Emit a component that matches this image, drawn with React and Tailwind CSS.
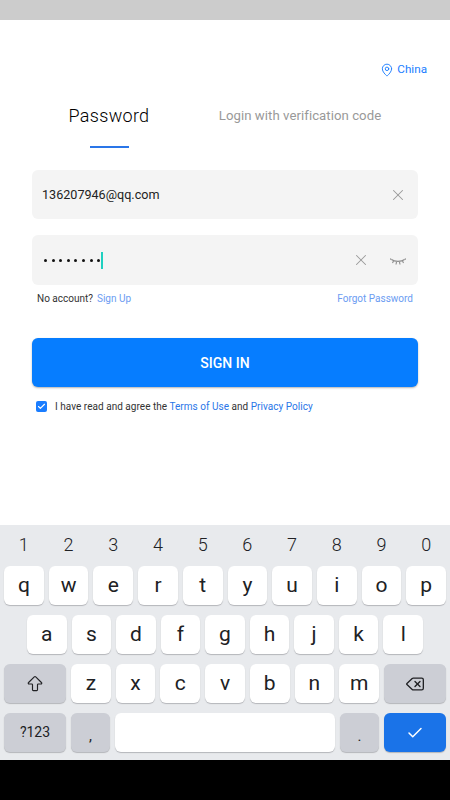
import { MapPin, X, Check, Delete, ArrowBigUp } from 'lucide-react';

const row1 = ['q', 'w', 'e', 'r', 't', 'y', 'u', 'i', 'o', 'p'];
const row2 = ['a', 's', 'd', 'f', 'g', 'h', 'j', 'k', 'l'];
const row3 = ['z', 'x', 'c', 'v', 'b', 'n', 'm'];
const digits = ['1', '2', '3', '4', '5', '6', '7', '8', '9', '0'];

function Key({ children, className = '' }) {
  return (
    <div className={`h-[39px] flex items-center justify-center rounded-[6px] text-[#202124] shadow-[0_1px_1px_#b4b6ba] ${className}`}>
      {children}
    </div>
  );
}

function ClosedEye() {
  return (
    <svg className="mt-[3px]" width="16" height="10" viewBox="0 0 16 10" fill="none" stroke="#8c8c8c" strokeWidth="1.1">
      <path d="M1.5 2.5C4.5 5 11.5 5 14.5 2.5" />
      <path d="M3.5 4L2.5 6M6.5 4.8L6 7.5M9.5 4.8L10 7.5M12.5 4L13.5 6M1.5 2.5L0 1.8M14.5 2.5L16 1.8" />
    </svg>
  );
}

export default function App() {
  return (
    <div className="w-[450px] h-[800px] flex flex-col bg-white font-['Roboto',sans-serif] overflow-hidden">
      <div className="h-5 bg-[#cccccc]" />

      <div className="h-[505px] px-8 flex flex-col">
        {/* Region */}
        <div className="mt-[41px] h-[18px] flex items-center justify-end gap-[3px] -mr-[9px] text-[11.7px] text-[#1a7dff]">
          <MapPin className="w-[14px] h-[14px]" strokeWidth={1.6} />
          China
        </div>

        {/* Tabs */}
        <div className="mt-[19px] -mx-8 flex">
          <div className="w-[218px] flex flex-col items-center">
            <div className="h-[36px] flex items-center text-lg font-light tracking-[0.3px] text-black">Password</div>
            <div className="mt-[12px] w-[39px] h-[2px] bg-[#2a76e8]" />
          </div>
          <div className="w-[164px] h-[36px] flex items-center justify-center whitespace-nowrap text-[13.2px] tracking-[0.05px] text-[#999999]">
            Login with verification code
          </div>
        </div>

        {/* Inputs */}
        <div className="mt-[22px] h-[49px] rounded-[6px] bg-[#f4f4f4] flex items-center pl-[10px] pr-[11px]">
          <span className="flex-1 pt-[1px] text-[12.6px] text-[#222222]">136207946@qq.com</span>
          <X className="w-[18px] h-[18px] text-[#999999]" strokeWidth={1.4} />
        </div>
        <div className="mt-[16px] h-[50px] rounded-[6px] bg-[#f4f4f4] flex items-center pl-[12px] pr-[12px]">
          <div className="flex-1 flex items-center gap-[4.6px]">
            {[0, 1, 2, 3, 4, 5, 6, 7].map((i) => (
              <span key={i} className="w-[3px] h-[3px] rounded-full bg-[#111111]" />
            ))}
            <span className="-ml-[3.6px] w-[2px] h-[17px] bg-[#1fd0c0]" />
          </div>
          <X className="w-[18px] h-[18px] text-[#999999] mr-[20px]" strokeWidth={1.4} />
          <ClosedEye />
        </div>

        <div className="mt-[7px] px-[5px] h-[13px] flex items-center justify-between text-[10px] leading-none">
          <div className="flex gap-[4px]">
            <span className="text-[#333333]">No account?</span>
            <span className="text-[#6b9cf2]">Sign Up</span>
          </div>
          <span className="text-[#6b9cf2]">Forgot Password</span>
        </div>

        {/* Submit */}
        <button className="mt-[33px] h-[49px] w-full rounded-[6px] bg-[#067dff] text-white text-sm font-medium shadow-[0_1px_2px_rgba(0,0,0,0.3)]">
          SIGN IN
        </button>

        <div className="mt-[14px] pl-[4px] flex items-center gap-[8px] text-[10px] tracking-[0.03px] leading-none text-[#333333]">
          <span className="w-[11px] h-[11px] rounded-[2px] bg-[#1a7dff] flex items-center justify-center">
            <Check className="w-[9px] h-[9px] text-white" strokeWidth={3} />
          </span>
          <span>
            I have read and agree the <span className="text-[#2a76e8]">Terms of Use</span> and{' '}
            <span className="text-[#2a76e8]">Privacy Policy</span>
          </span>
        </div>
      </div>

      {/* Keyboard */}
      <div className="h-[235px] bg-[#e8eaed] px-1 flex flex-col">
        <div className="h-[41px] grid grid-cols-10 gap-[5px] items-center pb-[2px]">
          {digits.map((d) => (
            <div key={d} className="text-center text-[18px] font-light text-[#202124]">{d}</div>
          ))}
        </div>
        <div className="grid grid-cols-10 gap-[5px]">
          {row1.map((k) => (
            <Key key={k} className="bg-white text-[21px]">{k}</Key>
          ))}
        </div>
        <div className="mt-[10px] px-[23px] grid grid-cols-9 gap-[5px]">
          {row2.map((k) => (
            <Key key={k} className="bg-white text-[21px]">{k}</Key>
          ))}
        </div>
        <div className="mt-[10px] flex gap-[5px]">
          <Key className="w-[62px] bg-[#ccced5]">
            <ArrowBigUp className="w-[20px] h-[20px]" strokeWidth={1.4} />
          </Key>
          <div className="flex-1 grid grid-cols-7 gap-[5px]">
            {row3.map((k) => (
              <Key key={k} className="bg-white text-[21px]">{k}</Key>
            ))}
          </div>
          <Key className="w-[62px] bg-[#ccced5]">
            <Delete className="w-[20px] h-[20px]" strokeWidth={1.6} />
          </Key>
        </div>
        <div className="mt-[10px] flex gap-[5px]">
          <Key className="w-[62px] bg-[#ccced5] text-[14px]">?123</Key>
          <Key className="w-[39px] bg-[#ccced5] text-[15px] pt-[8px]">,</Key>
          <Key className="flex-1 bg-white" />
          <Key className="w-[39px] bg-[#ccced5] text-[15px] pt-[8px]">.</Key>
          <Key className="w-[62px] bg-[#1a73e8] text-white">
            <Check className="w-[18px] h-[18px]" strokeWidth={2} />
          </Key>
        </div>
      </div>

      <div className="flex-1 bg-black" />
    </div>
  );
}
